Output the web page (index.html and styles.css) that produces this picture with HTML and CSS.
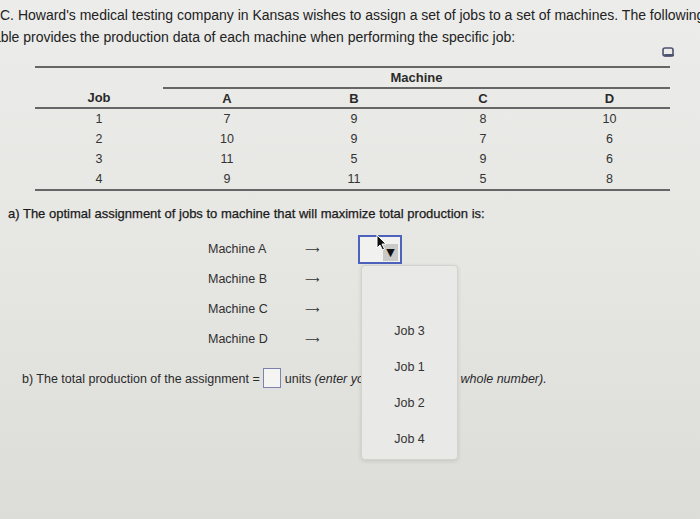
FILE: index.html
```html
<!DOCTYPE html>
<html>
<head>
<meta charset="utf-8">
<link rel="stylesheet" href="styles.css">
</head>
<body>
<div class="page">
  <div class="intro">
    <div class="line1">C. Howard's medical testing company in Kansas wishes to assign a set of jobs to a set of machines. The following</div>
    <div class="line2">table provides the production data of each machine when performing the specific job:</div>
  </div>

  <div class="table-wrap">
    <svg class="copy-icon" width="13" height="11" viewBox="0 0 13 11">
      <rect x="1" y="1" width="10" height="8" rx="2" fill="none" stroke="#4d5270" stroke-width="1.6"/>
      <rect x="2" y="7" width="10" height="2.5" rx="1" fill="#4d5270"/>
    </svg>
    <table class="data">
      <colgroup>
        <col class="c-job"><col class="c-a"><col class="c-b"><col class="c-c"><col class="c-d">
      </colgroup>
      <thead>
        <tr class="row-machine"><th></th><th colspan="4" class="machine">Machine</th></tr>
        <tr class="row-head"><th>Job</th><th>A</th><th>B</th><th>C</th><th>D</th></tr>
      </thead>
      <tbody>
        <tr><td>1</td><td>7</td><td>9</td><td>8</td><td>10</td></tr>
        <tr><td>2</td><td>10</td><td>9</td><td>7</td><td>6</td></tr>
        <tr><td>3</td><td>11</td><td>5</td><td>9</td><td>6</td></tr>
        <tr><td>4</td><td>9</td><td>11</td><td>5</td><td>8</td></tr>
      </tbody>
    </table>
  </div>

  <p class="qa">a) The optimal assignment of jobs to machine that will maximize total production is:</p>

  <div class="assign">
    <span class="mlabel">Machine A</span><span class="arrow">⟶</span>
    <div class="select">
      <span class="select-btn">▼</span>
      <svg class="cursor" width="11" height="17" viewBox="0 0 11 17">
        <path d="M1 1 L1 14 L4 11 L6.5 16 L8.5 15 L6 10 L10 10 Z" fill="#111" stroke="#fff" stroke-width="1"/>
      </svg>
      <div class="menu">
        <div class="item">Job 3</div>
        <div class="item">Job 1</div>
        <div class="item">Job 2</div>
        <div class="item">Job 4</div>
      </div>
    </div>
    <span class="mlabel">Machine B</span><span class="arrow">⟶</span><span></span>
    <span class="mlabel">Machine C</span><span class="arrow">⟶</span><span></span>
    <span class="mlabel">Machine D</span><span class="arrow">⟶</span><span></span>
  </div>

  <p class="qb">b) The total production of the assignment = <span class="inbox"></span> units <em>(enter your response as a whole number).</em></p>
</div>
</body>
</html>
```

FILE: styles.css
```css
html, body {
  margin: 0;
  padding: 0;
}
body {
  width: 700px;
  height: 519px;
  overflow: hidden;
  background: linear-gradient(180deg, #ececea 0%, #e6e6e3 50%, #dcdcd9 100%);
  font-family: "Liberation Sans", Arial, sans-serif;
  color: #2b2b2b;
}
.page {
  position: relative;
  height: 519px;
  border-left: 3px solid transparent;
}
.intro {
  padding-top: 4px;
  font-size: 14px;
  line-height: 22px;
  color: #222;
  white-space: nowrap;
}
.line1 {
  margin-left: -3px;
}
.line2 {
  margin-left: -14px;
}
.table-wrap {
  position: relative;
  margin: 18px 0 0 32px;
  width: 635px;
}
.copy-icon {
  position: absolute;
  right: -5px;
  top: -19px;
}
.data {
  border-collapse: collapse;
  width: 635px;
  font-size: 12.5px;
  color: #333;
}
.c-job { width: 128px; }
.c-a { width: 128px; }
.c-b { width: 126px; }
.c-c { width: 132px; }
.c-d { width: 121px; }
.data th, .data td {
  padding: 0;
  text-align: center;
  line-height: 15px;
}
.row-machine th {
  border-top: 2px solid #666;
  height: 19px;
}
.row-machine .machine {
  border-bottom: 2px solid #666;
  font-weight: bold;
  font-size: 13px;
  color: #2a2a2a;
}
.row-head th {
  height: 18px;
  border-bottom: 2px solid #666;
  font-weight: bold;
  font-size: 13px;
  color: #2a2a2a;
}
.data tbody td {
  height: 20px;
}
.data tbody tr:last-child td {
  border-bottom: 2px solid #666;
}
.qa {
  margin: 15px 0 0 5px;
  font-size: 13px;
  line-height: 16px;
  color: #1a1a1a;
  -webkit-text-stroke: 0.25px #1a1a1a;
}
.assign {
  display: grid;
  grid-template-columns: 97px 53px 50px;
  grid-auto-rows: 30px;
  align-items: center;
  margin: 12px 0 0 205px;
  font-size: 12.5px;
  color: #2f2f2f;
}
.arrow {
  font-family: "DejaVu Sans", sans-serif;
  font-size: 10px;
  color: #333;
}
.select {
  position: relative;
  width: 40px;
  height: 25px;
  border: 2px solid #4c62bd;
  background: #f1f1ef;
  box-sizing: content-box;
}
.select-btn {
  position: absolute;
  right: 2px;
  bottom: 1px;
  width: 15px;
  height: 17px;
  background: #c9c9c7;
  font-family: "DejaVu Sans", sans-serif;
  font-size: 11px;
  line-height: 17px;
  text-align: center;
  color: #111;
}
.cursor {
  position: absolute;
  left: 16px;
  top: -3px;
}
.menu {
  position: absolute;
  left: 1px;
  top: 28px;
  width: 97px;
  height: 195px;
  box-sizing: border-box;
  padding-top: 47px;
  background: #e9e9e7;
  border: 1px solid #d2d2cf;
  border-radius: 4px;
  box-shadow: 0 1px 4px rgba(0,0,0,0.12);
  z-index: 5;
}
.item {
  height: 36px;
  line-height: 36px;
  text-align: center;
  font-size: 12.5px;
  color: #333;
}
.qb {
  margin: 14px 0 0 19px;
  font-size: 12.5px;
  line-height: 16px;
  color: #2a2a2a;
  white-space: nowrap;
}
.inbox {
  display: inline-block;
  width: 16px;
  height: 18px;
  border: 1px solid #7d82ad;
  background: #f4f4f2;
  vertical-align: -5px;
}
.qb em {
  font-style: italic;
}
```
